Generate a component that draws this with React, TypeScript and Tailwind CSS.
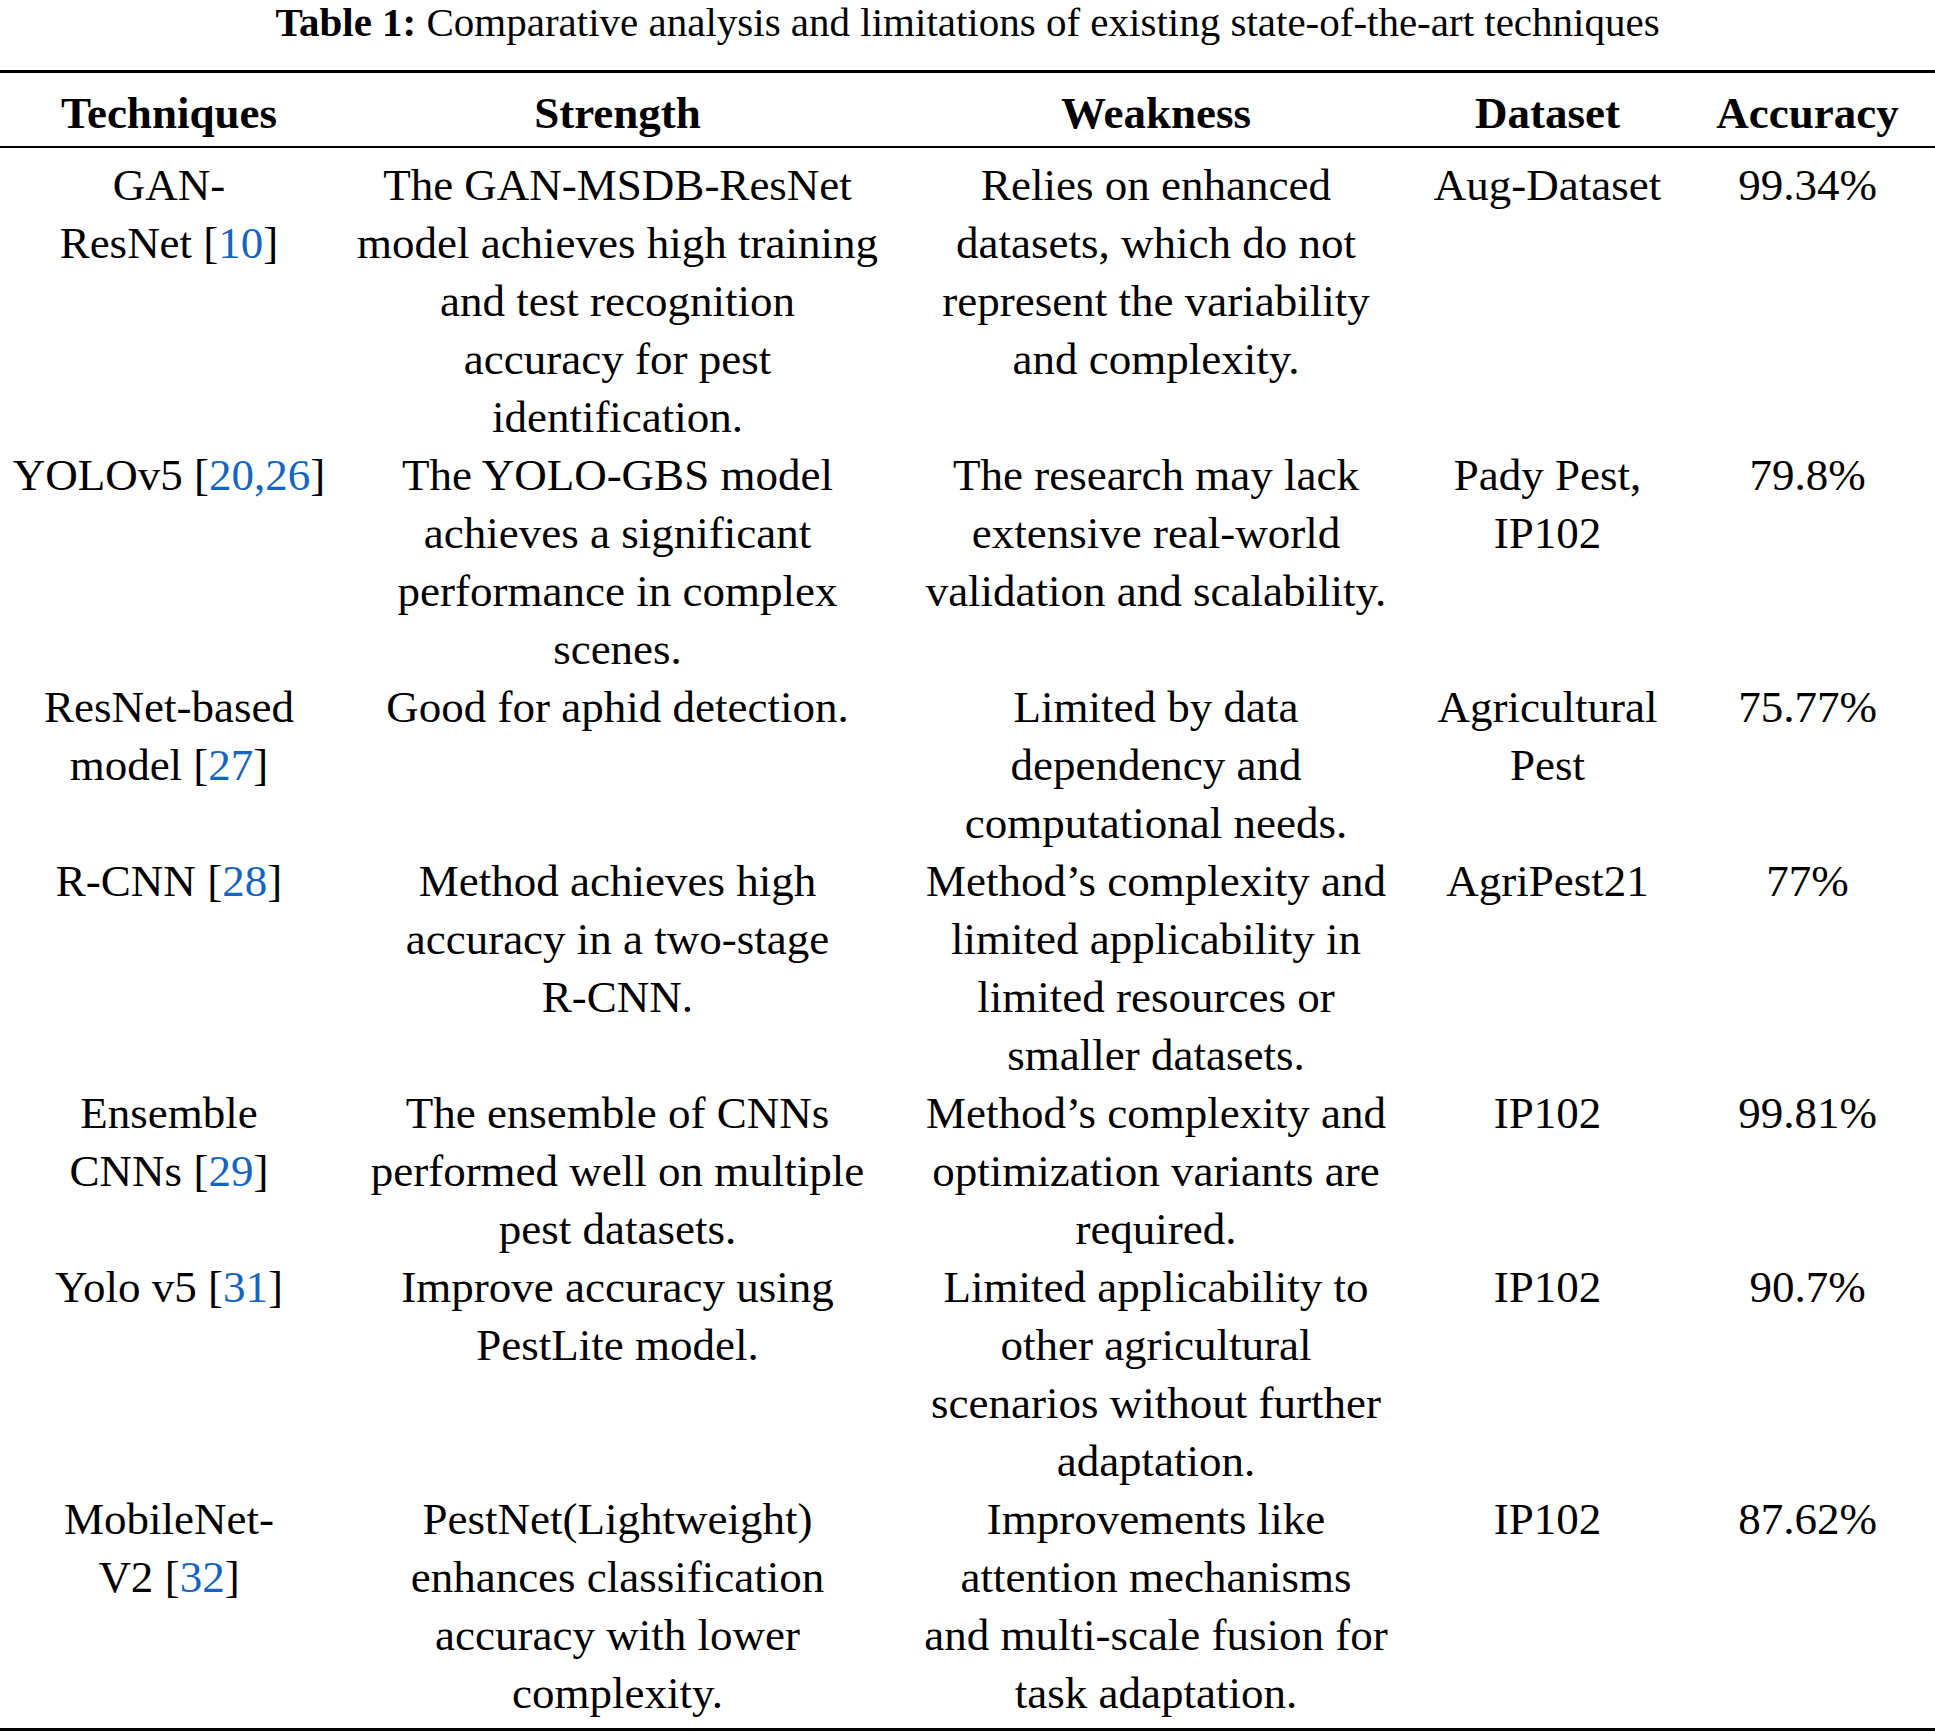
import type { ReactNode } from 'react';

type Row = {
  technique: ReactNode[];
  strength: string[];
  weakness: string[];
  dataset: string[];
  accuracy: string;
};

const Ref = ({ n }: { n: string }) => (
  <>
    [<span className="text-[#1565c0]">{n}</span>]
  </>
);

const rows: Row[] = [
  {
    technique: ['GAN-', <>ResNet <Ref n="10" /></>],
    strength: [
      'The GAN-MSDB-ResNet',
      'model achieves high training',
      'and test recognition',
      'accuracy for pest',
      'identification.',
    ],
    weakness: ['Relies on enhanced', 'datasets, which do not', 'represent the variability', 'and complexity.'],
    dataset: ['Aug-Dataset'],
    accuracy: '99.34%',
  },
  {
    technique: [<>YOLOv5 <Ref n="20,26" /></>],
    strength: ['The YOLO-GBS model', 'achieves a significant', 'performance in complex', 'scenes.'],
    weakness: ['The research may lack', 'extensive real-world', 'validation and scalability.'],
    dataset: ['Pady Pest,', 'IP102'],
    accuracy: '79.8%',
  },
  {
    technique: ['ResNet-based', <>model <Ref n="27" /></>],
    strength: ['Good for aphid detection.'],
    weakness: ['Limited by data', 'dependency and', 'computational needs.'],
    dataset: ['Agricultural', 'Pest'],
    accuracy: '75.77%',
  },
  {
    technique: [<>R-CNN <Ref n="28" /></>],
    strength: ['Method achieves high', 'accuracy in a two-stage', 'R-CNN.'],
    weakness: ['Method’s complexity and', 'limited applicability in', 'limited resources or', 'smaller datasets.'],
    dataset: ['AgriPest21'],
    accuracy: '77%',
  },
  {
    technique: ['Ensemble', <>CNNs <Ref n="29" /></>],
    strength: ['The ensemble of CNNs', 'performed well on multiple', 'pest datasets.'],
    weakness: ['Method’s complexity and', 'optimization variants are', 'required.'],
    dataset: ['IP102'],
    accuracy: '99.81%',
  },
  {
    technique: [<>Yolo v5 <Ref n="31" /></>],
    strength: ['Improve accuracy using', 'PestLite model.'],
    weakness: ['Limited applicability to', 'other agricultural', 'scenarios without further', 'adaptation.'],
    dataset: ['IP102'],
    accuracy: '90.7%',
  },
  {
    technique: ['MobileNet-', <>V2 <Ref n="32" /></>],
    strength: ['PestNet(Lightweight)', 'enhances classification', 'accuracy with lower', 'complexity.'],
    weakness: ['Improvements like', 'attention mechanisms', 'and multi-scale fusion for', 'task adaptation.'],
    dataset: ['IP102'],
    accuracy: '87.62%',
  },
];

const Cell = ({ lines }: { lines: ReactNode[] }) => (
  <div className="flex flex-col items-center">
    {lines.map((line, i) => (
      <div key={i} className="whitespace-nowrap">
        {line}
      </div>
    ))}
  </div>
);

const cols = 'grid grid-cols-[338px_559px_518px_265px_255px]';

export default function App() {
  return (
    <div className="w-[1935px] h-[1734px] bg-white text-black font-['Liberation_Serif',serif] text-[45px] leading-[58px]">
      {/* Caption */}
      <div className="text-center text-[41px] leading-[45px]">
        <span className="font-bold">Table 1:</span> Comparative analysis and limitations of existing
        state-of-the-art techniques
      </div>

      {/* Table */}
      <div className="mt-[25px] border-t-[3px] border-black">
        <div className={`${cols} pt-[11px] pb-[4px] font-bold border-b-2 border-black`}>
          <div className="text-center">Techniques</div>
          <div className="text-center">Strength</div>
          <div className="text-center">Weakness</div>
          <div className="text-center">Dataset</div>
          <div className="text-center">Accuracy</div>
        </div>

        <div className={`${cols} pt-[8px] pb-[6px] border-b-[3px] border-black`}>
          {rows.map((row, i) => (
            <div key={i} className="contents">
              <Cell lines={row.technique} />
              <Cell lines={row.strength} />
              <Cell lines={row.weakness} />
              <Cell lines={row.dataset} />
              <Cell lines={[row.accuracy]} />
            </div>
          ))}
        </div>
      </div>
    </div>
  );
}
